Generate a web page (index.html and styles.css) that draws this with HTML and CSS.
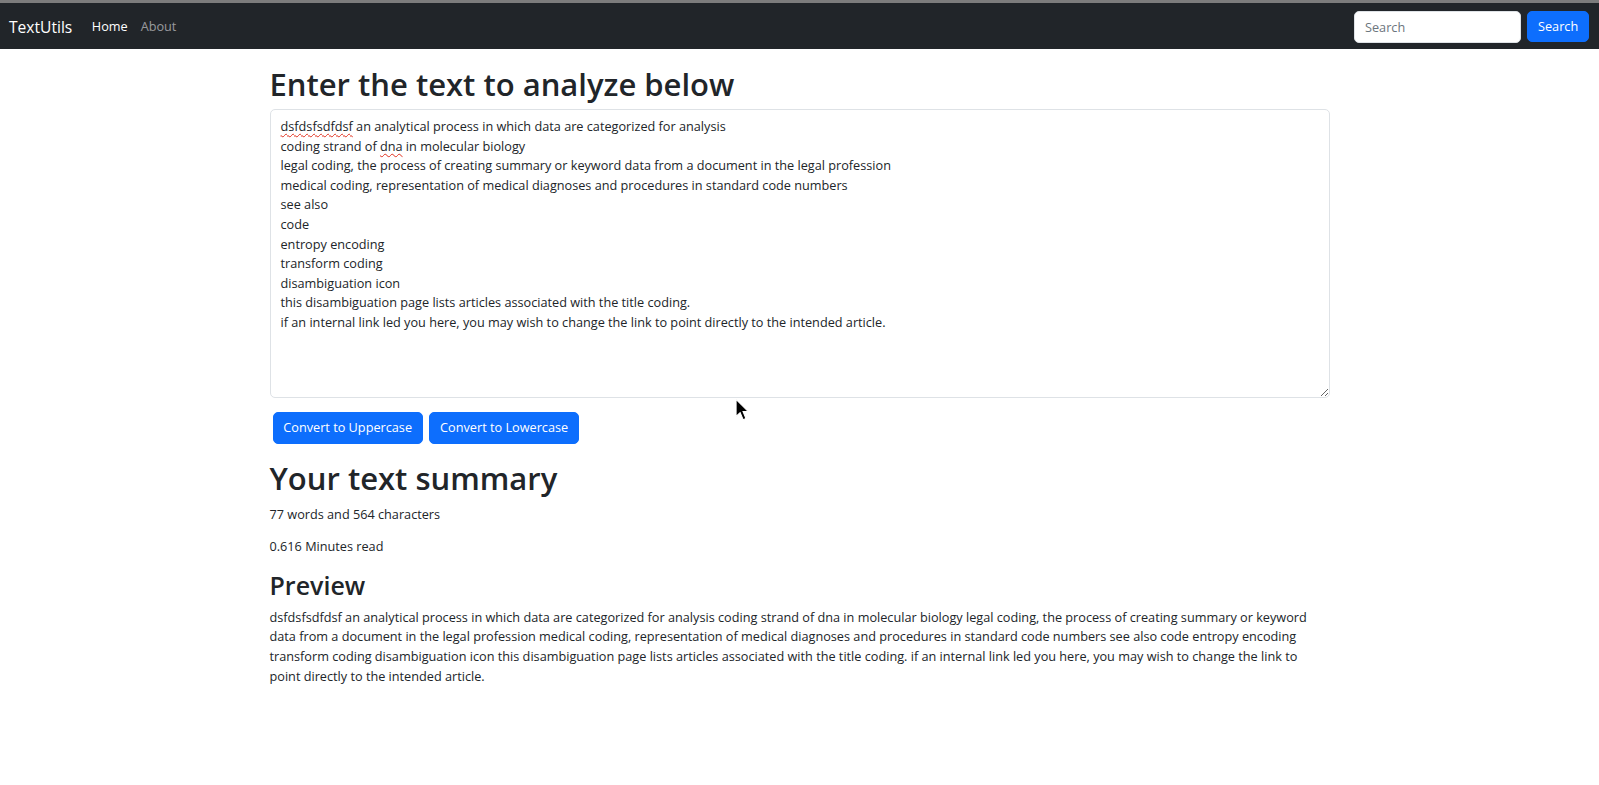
FILE: index.html
```html
<!DOCTYPE html>
<html lang="en">
<head>
<meta charset="utf-8">
<title>TextUtils</title>
<link rel="stylesheet" href="styles.css">
</head>
<body>
<nav class="navbar">
  <div class="nav-left">
    <a class="brand" href="#">TextUtils</a>
    <ul class="nav-links">
      <li><a class="nav-link active" href="#">Home</a></li>
      <li><a class="nav-link" href="#">About</a></li>
    </ul>
  </div>
  <form class="search-form">
    <input class="search-input" type="search" placeholder="Search">
    <button class="btn btn-primary" type="button">Search</button>
  </form>
</nav>

<main class="container">
  <h1 class="heading">Enter the text to analyze below</h1>
  <div class="text-box"><span class="misspelled">dsfdsfsdfdsf</span> an analytical process in which data are categorized for analysis
coding strand of <span class="misspelled">dna</span> in molecular biology
legal coding, the process of creating summary or keyword data from a document in the legal profession
medical coding, representation of medical diagnoses and procedures in standard code numbers
see also
code
entropy encoding
transform coding
disambiguation icon
this disambiguation page lists articles associated with the title coding.
if an internal link led you here, you may wish to change the link to point directly to the intended article.</div>
  <div class="actions">
    <button class="btn btn-primary" type="button">Convert to Uppercase</button>
    <button class="btn btn-primary" type="button">Convert to Lowercase</button>
  </div>

  <section class="summary">
    <h1 class="heading">Your text summary</h1>
    <p>77 words and 564 characters</p>
    <p>0.616 Minutes read</p>
    <h2 class="subheading">Preview</h2>
    <p>dsfdsfsdfdsf an analytical process in which data are categorized for analysis coding strand of dna in molecular biology legal coding, the process of creating summary or keyword data from a document in the legal profession medical coding, representation of medical diagnoses and procedures in standard code numbers see also code entropy encoding transform coding disambiguation icon this disambiguation page lists articles associated with the title coding. if an internal link led you here, you may wish to change the link to point directly to the intended article.</p>
  </section>
</main>

<svg class="cursor" width="15" height="24" viewBox="0 0 14 22" aria-hidden="true">
  <path d="M1 1 L1 17 L4.8 13.4 L7.6 20 L10.2 18.9 L7.5 12.5 L12.5 12.5 Z" fill="#000" stroke="#fff" stroke-width="1"/>
</svg>
</body>
</html>
```

FILE: styles.css
```css
* { box-sizing: border-box; }

html, body {
  margin: 0;
  padding: 0;
}

body {
  font-family: "Open Sans", "Noto Sans", sans-serif;
  font-size: 12.7px;
  line-height: 19.6px;
  color: #212529;
  background: #fff;
}

.navbar {
  display: flex;
  align-items: center;
  justify-content: space-between;
  height: 49px;
  border-top: 3px solid #7c7c7c;
  background: #212529;
  padding: 1px 10px 0 9px;
}

.nav-left {
  display: flex;
  align-items: center;
}

.brand {
  font-size: 15.6px;
  line-height: 24px;
  color: #fff;
  text-decoration: none;
  margin-right: 13px;
}

.nav-links {
  display: flex;
  list-style: none;
  margin: 0;
  padding: 0;
}

.nav-link {
  display: block;
  padding: 6.5px 6.5px;
  color: rgba(255, 255, 255, 0.55);
  text-decoration: none;
}

.nav-link.active {
  color: #fff;
}

.search-form {
  display: flex;
  align-items: center;
  gap: 6px;
}

.search-input {
  width: 167px;
  height: 32px;
  padding: 4.9px 9.8px;
  font: inherit;
  color: #212529;
  border: 1px solid #dee2e6;
  border-radius: 5px;
  background: #fff;
}

.search-input::placeholder {
  color: #6c757d;
}

.btn {
  font: inherit;
  line-height: 19.6px;
  padding: 5px 9.8px;
  border: 1px solid transparent;
  border-radius: 5px;
  cursor: pointer;
}

.btn-primary {
  color: #fff;
  background: #0d6efd;
  border-color: #0d6efd;
}

.container {
  width: 1060px;
  margin: 0 auto;
  padding-top: 16px;
}

.heading {
  font-size: 31px;
  font-weight: 600;
  line-height: 39.6px;
  margin: 0 0 4.5px;
}

.subheading {
  font-size: 25px;
  font-weight: 600;
  line-height: 31.4px;
  margin: 2px 0 6.5px;
}

.summary .heading {
  margin-bottom: 6.5px;
}

.text-box {
  height: 289px;
  padding: 7px 10px 5px;
  border: 1px solid #dee2e6;
  border-radius: 5px;
  white-space: pre-line;
  overflow: auto;
  resize: vertical;
  margin-bottom: 14px;
}

.misspelled {
  text-decoration: underline wavy #e0301e;
  text-decoration-thickness: 1px;
  text-underline-offset: 2px;
}

.actions {
  display: flex;
  gap: 6.5px;
  padding-left: 3px;
}

.summary {
  margin-top: 15px;
}

.summary p {
  margin: 0 0 13px;
}

.cursor {
  position: absolute;
  left: 735px;
  top: 398px;
}
```
